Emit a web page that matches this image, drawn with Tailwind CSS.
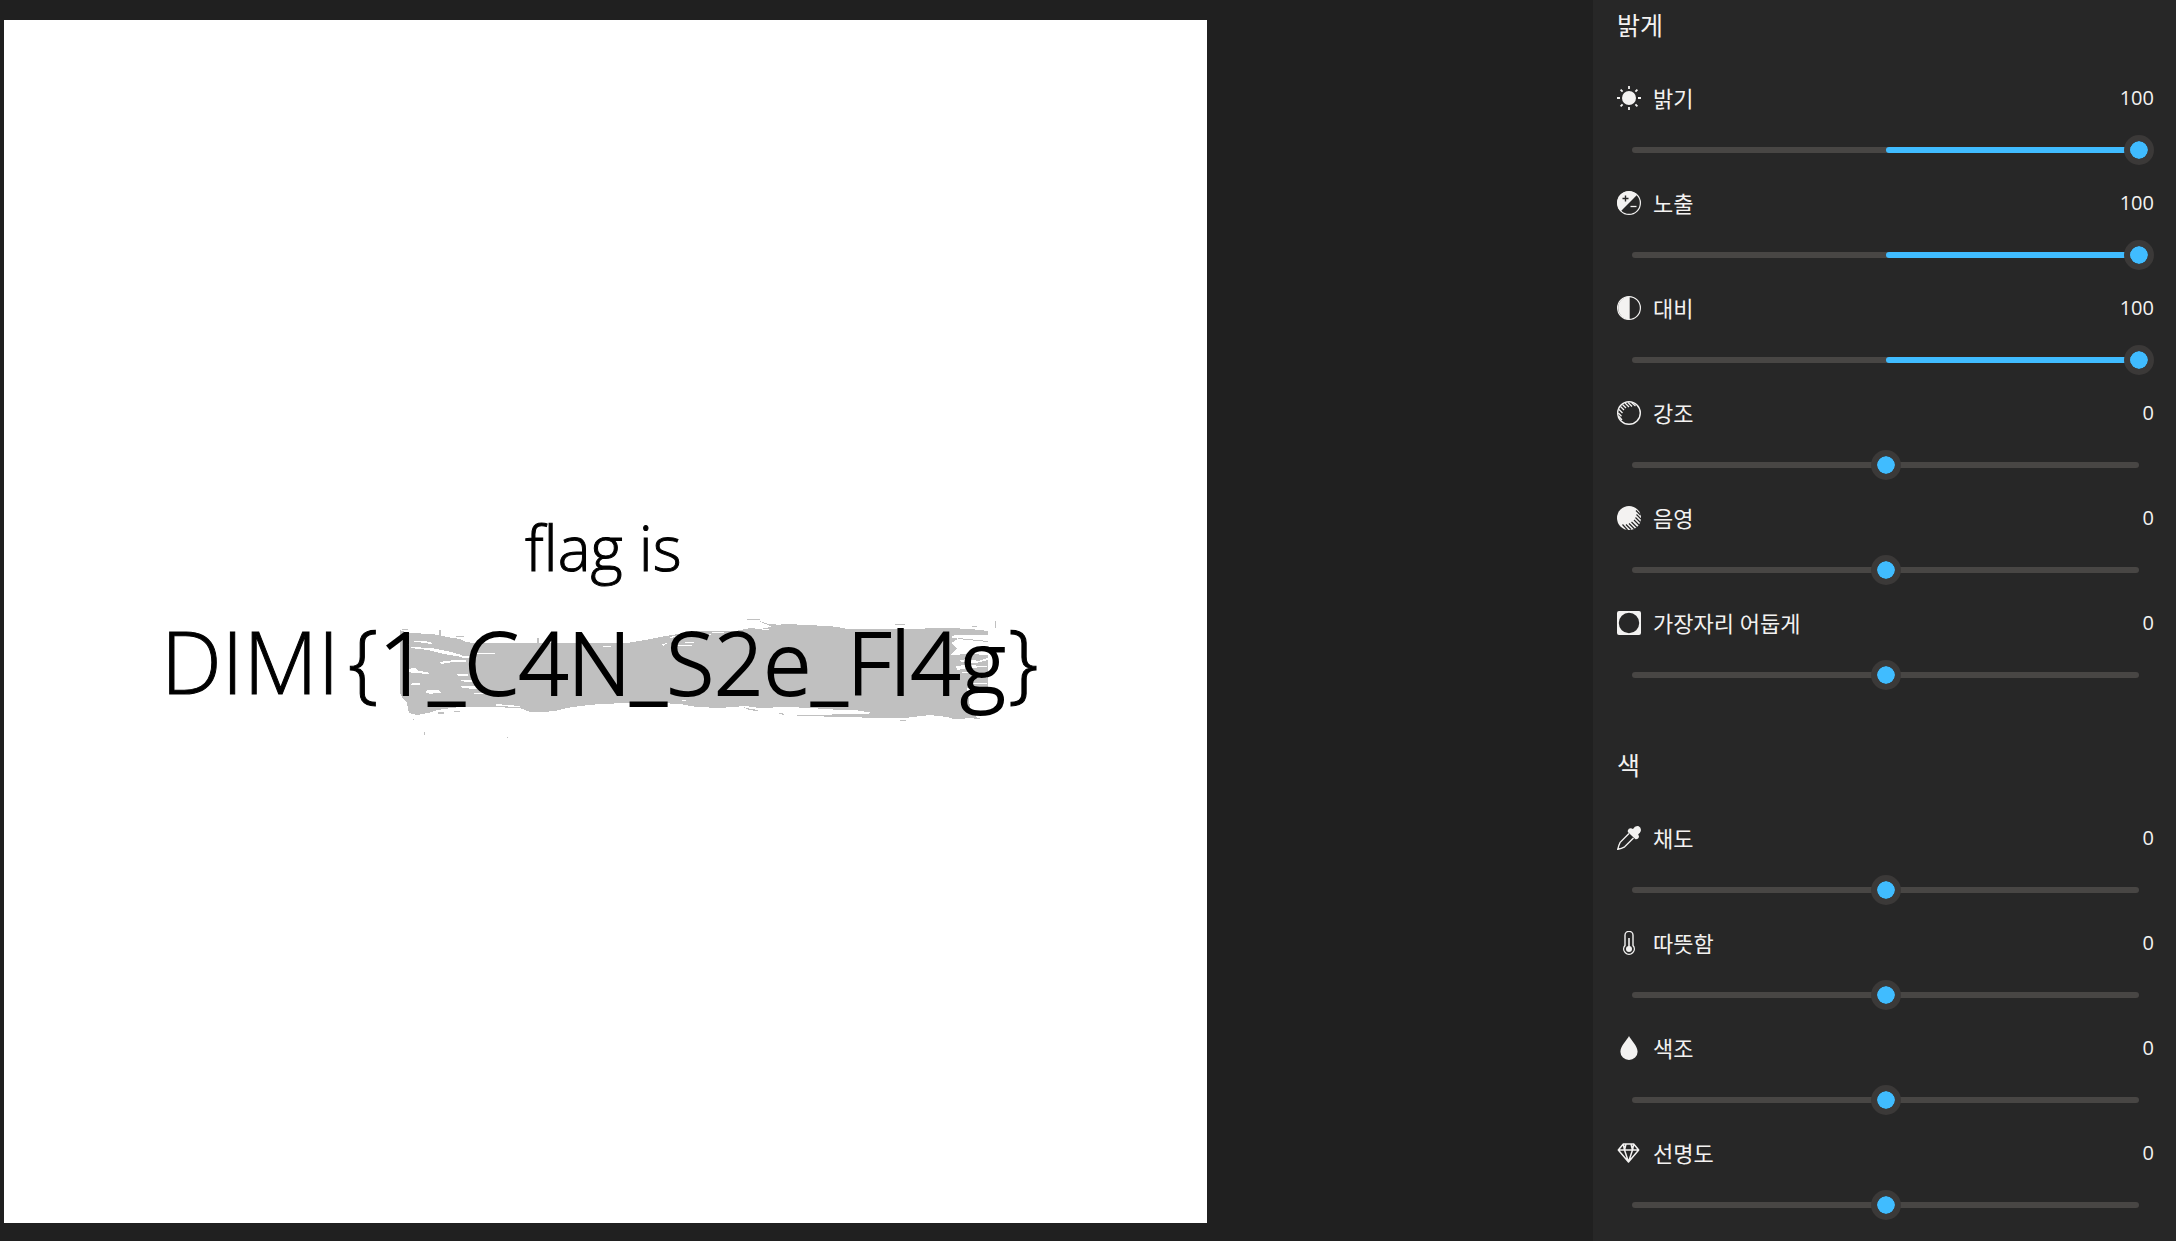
<!DOCTYPE html>
<html lang="ko">

<head>
    <meta charset="UTF-8">
    <meta name="viewport" content="width=device-width, initial-scale=1.0">
    <script src="https://cdn.jsdelivr.net/npm/@tailwindcss/browser@4"></script>
    <title>사진 편집</title>
</head>

<body class="flex h-screen overflow-hidden bg-[#202020] text-[#f3f2f1] font-['Open_Sans','Noto_Sans_CJK_KR',sans-serif]">
    <!-- Photo -->
    <main class="min-w-0 grow pt-5 pb-[18px] pl-1">
        <svg class="aspect-square h-full bg-white" viewBox="4 20 1203 1203" role="img" aria-label="flag">
            <!-- brush stroke -->
            <g fill="#c0c0c0" shape-rendering="crispEdges">
                <path d="M400 630L408 633 433 634 447 637 460 639 466 642 473 643H627L645 640 660 637 672 635 687 632 705 631 723 631 753 630 767 628 775 625 787 624 827 626 838 627 847 629H900L950 628 970 629 988 631V635L953 635 958 639 951 643 957 648 950 655 970 654 988 655V687L967 688 970 707 974 712 977 718 953 719 947 717 930 715 905 718 873 718 850 717 797 716V715L867 714 870 713 855 710 840 710 810 708 787 707 760 708 745 706 720 708 697 707 680 704 660 703H627L600 704 580 706 567 708 555 711 543 712 530 712 520 708 490 707 460 707 437 710 428 713 417 715 409 713 407 703 402 697 400 693Z" />
                <path d="M747 619h13v1h-13zM759 621l10 3 14 1 14 2-7 1-20-2zM740 630l10-2 12 1-3 1-14 1zM895 624h10v1h-10zM995 621h1v7h-1zM972 626h5v1h-5zM402 629h6v1h-6zM439 630h2v6h-2zM456 636h8v1h-8zM537 638h2v5h-2zM958 638l30 3v1l-30-3zM743 707l8 2 7 1-1 1-8-1zM778 713h5l1 2-5-1zM900 720h6v1h-6zM974 718h6v1h-6zM438 712h6v2h-6zM454 711h6v1h-6zM413 719h1v1h-1zM424 732h1v3h-1zM507 737h1v1h-1z" />
            </g>
            <!-- bare spots between the bristles -->
            <g fill="#fff" shape-rendering="crispEdges">
                <path d="M409 641l16 0 8 2-2 1-13-2zM411 647l20 1 16 3 15 4 0 2-18-3-16-4-17-2zM473 653h22v1h-22zM439 662l16-2 11 0v2l-13 0-12 2zM462 656h10v2h-10zM407 669l8-1 4 3 8 1 2 2-14-1-8-1zM407 684l9-1 8 1-9 1zM427 690l12 0 2 3-6 0-4 1-5-1zM456 674h12v2h-9zM459 680h14v2h-8zM460 686h14l12 2-10 1-14-1zM474 693h14v1h-14zM489 709h10v1h14l8 1h-16l-14 0zM496 704l24 2v1l-24-1z" />
                <path d="M603 646h8v1h-8zM614 641h14v1h-14zM661 644l7-1-5 3zM667 637l9-1-4 2zM674 645h18v1h-18zM685 642h9v1h-9zM695 634h16v1h-16zM712 632h12v1h-12zM682 700h4v1h-4zM755 628l14 1v1l-14-1zM790 707l22 2 0 1-24-1zM845 710l25 2v1l-25-1zM952 636h36v2h-36zM955 642l10-1 17 1-1 1h-22zM959 660l9-1 10 2 10-3v2l-12 3-14-1zM956 666l9-1 22 1v1l-20 1-10 2zM962 672h24v1h-24zM970 677h17v1h-17zM967 683h20v1h-20z" />
            </g>
            <g class="font-['Open_Sans',sans-serif] font-light" fill="#000" stroke="#000">
                <text x="525" y="571" font-size="62">flag is</text>
                <text x="161" y="694" font-size="86">DIMI</text>
                <text x="348" y="692" font-size="86">{</text>
                <text x="379" y="695" font-size="87" stroke-width="2">1_C4N_S2e_Fl4g</text>
                <text x="1008" y="692" font-size="86">}</text>
            </g>
        </svg>
    </main>

    <!-- Adjustments -->
    <aside class="flex w-[583px] shrink-0 flex-col gap-[60px] bg-[#272727] pt-[10px] pr-[22px] pl-6">
        <section>
            <h2 class="mb-[43px] text-[25px] leading-[30px]">밝게</h2>
            <div id="lightList" class="flex flex-col gap-[23px]"></div>
        </section>
        <section>
            <h2 class="mb-[43px] text-[25px] leading-[30px]">색</h2>
            <div id="colorList" class="flex flex-col gap-[23px]"></div>
        </section>
    </aside>

    <script>
        // ---------------- Icons (24 x 24) ----------------
        const icons = {
            brightness: `<circle cx="12" cy="12" r="7" fill="currentColor"/>
                <path d="M12 0v3M12 21v3M0 12h3M21 12h3M3.6 3.6l2 2M18.400 18.400l2 2M20.400 3.600l-2 2M5.600 18.400l-2 2" stroke="currentColor" stroke-width="1.800"/>`,
            exposure: `<circle cx="12" cy="12" r="11.400" stroke="currentColor" stroke-width="1.200"/>
                <path d="M20.200 3.800A11.600 11.600 0 1 0 3.800 20.200z" fill="currentColor"/>
                <path d="M5.500 7.500h6M8.500 4.500v6" stroke="#272727" stroke-width="1.400"/>
                <path d="M13.500 15.500h6" stroke="currentColor" stroke-width="1.300"/>`,
            contrast: `<circle cx="12" cy="12" r="11.400" stroke="currentColor" stroke-width="1.200"/>
                <path d="M12.700 .5a11.500 11.500 0 0 0 0 23z" fill="currentColor"/>`,
            highlights: `<circle cx="12" cy="12" r="11.300" stroke="currentColor" stroke-width="1.400"/>
                <path d="M14.500 1.500l4 3.500M11 1.500l4 4M8 2l4 4M5.500 3.500l3.500 3.500M3.500 5.500l3.500 3.500M2 8.500l3.500 3.500M1.300 12l3.200 3.200M1.500 15l3.500 4" stroke="currentColor" stroke-width="1.300"/>`,
            shadows: `<circle cx="12" cy="12" r="12" fill="currentColor"/>
                <path d="M19 4.500l4.500 4.500M19.500 8.500l4.500 4.500M18.500 11.500l5 5M17 14l5 5M14.500 16l5.500 5.500M12 17.500l5.500 5.500M9 18.500l5 5M5.500 18.500l5 5.500" stroke="#272727" stroke-width="1.200"/>`,
            vignette: `<path fill-rule="evenodd" d="M2 0h20a2 2 0 0 1 2 2v20a2 2 0 0 1-2 2H2a2 2 0 0 1-2-2V2a2 2 0 0 1 2-2zM12 1.800a10.200 10.200 0 1 0 0 20.400 10.200 10.200 0 0 0 0-20.400z" fill="currentColor"/>`,
            saturation: `<path d="M12 7.500L3.200 16.300Q1.600 19.500.8 23.200 4.600 22.500 7.700 20.800L16.500 12" stroke="currentColor" stroke-width="1.400"/>
                <path d="M10.800 4.500Q11.500 2 14 2.200L16 3Q18.200-.8 21.800.3 24.800 2 23.600 5.500 23 7 21.200 8.200L22 10.500Q21.500 13.500 18.500 13.200L10.800 6z" fill="currentColor"/>`,
            warmth: `<path d="M8 14.500V4.300a4 4 0 0 1 8 0v10.200a5.300 5.300 0 1 1-8 0z" stroke="currentColor" stroke-width="1.400"/>
                <circle cx="12" cy="18" r="3" fill="currentColor"/>
                <path d="M12 7v10" stroke="currentColor" stroke-width="1.600"/>`,
            tint: `<path d="M12 0C13.500 3.500 20.600 9.800 20.600 15.800a8.600 8.200 0 0 1-17.200 0C3.400 9.800 10.500 3.500 12 0z" fill="currentColor"/>`,
            clarity: `<path d="M6.300 3h10.400l5 6-10.200 12L1.300 9zM1.300 9h20.400M9 3L7.500 9l4 12 4-12L14 3M6.300 3l1.200 6M16.700 3l-1.200 6" stroke="currentColor" stroke-width="1.500" stroke-linejoin="round"/>`
        };

        const light = [
            { id: "brightness", label: "밝기", value: 100 },
            { id: "exposure", label: "노출", value: 100 },
            { id: "contrast", label: "대비", value: 100 },
            { id: "highlights", label: "강조", value: 0 },
            { id: "shadows", label: "음영", value: 0 },
            { id: "vignette", label: "가장자리 어둡게", value: 0 }
        ];

        const color = [
            { id: "saturation", label: "채도", value: 0 },
            { id: "warmth", label: "따뜻함", value: 0 },
            { id: "tint", label: "색조", value: 0 },
            { id: "clarity", label: "선명도", value: 0 }
        ];

        // The coloured bar grows out of the middle of the track
        function fillStyle(value) {
            return `margin-left:${50 + Math.min(value, 0) / 2}%;width:${Math.abs(value) / 2}%`;
        }

        function sliderRow({ id, label, value }) {
            return `
                <div class="flex flex-col gap-[22px]">
                    <div class="flex h-[30px] items-center gap-3">
                        <svg class="size-6 shrink-0" viewBox="0 0 24 24" fill="none" aria-hidden="true">${icons[id]}</svg>
                        <label for="${id}" class="grow text-[22px] leading-[30px]">${label}</label>
                        <output for="${id}" class="text-[20px] leading-[30px]">${value}</output>
                    </div>
                    <div class="grid h-[30px] items-center">
                        <div class="col-start-1 row-start-1 mx-[15px] h-[6px] rounded-full bg-[#484644]">
                            <div class="h-full rounded-full bg-[#40bcff]" data-fill style="${fillStyle(value)}"></div>
                        </div>
                        <input type="range" id="${id}" min="-100" max="100" value="${value}"
                            class="relative col-start-1 row-start-1 h-[30px] w-full cursor-pointer appearance-none bg-transparent [&::-webkit-slider-thumb]:size-[30px] [&::-webkit-slider-thumb]:appearance-none [&::-webkit-slider-thumb]:rounded-full [&::-webkit-slider-thumb]:border-[6px] [&::-webkit-slider-thumb]:border-[#3b3938] [&::-webkit-slider-thumb]:bg-[#40bcff] [&::-webkit-slider-thumb]:bg-clip-padding">
                    </div>
                </div>`;
        }

        document.getElementById("lightList").innerHTML = light.map(sliderRow).join("");
        document.getElementById("colorList").innerHTML = color.map(sliderRow).join("");

        document.querySelectorAll("input[type=range]").forEach((input) => {
            input.addEventListener("input", () => {
                document.querySelector(`output[for=${input.id}]`).textContent = input.value;
                input.parentElement.querySelector("[data-fill]").style.cssText = fillStyle(Number(input.value));
            });
        });
    </script>
</body>

</html>
